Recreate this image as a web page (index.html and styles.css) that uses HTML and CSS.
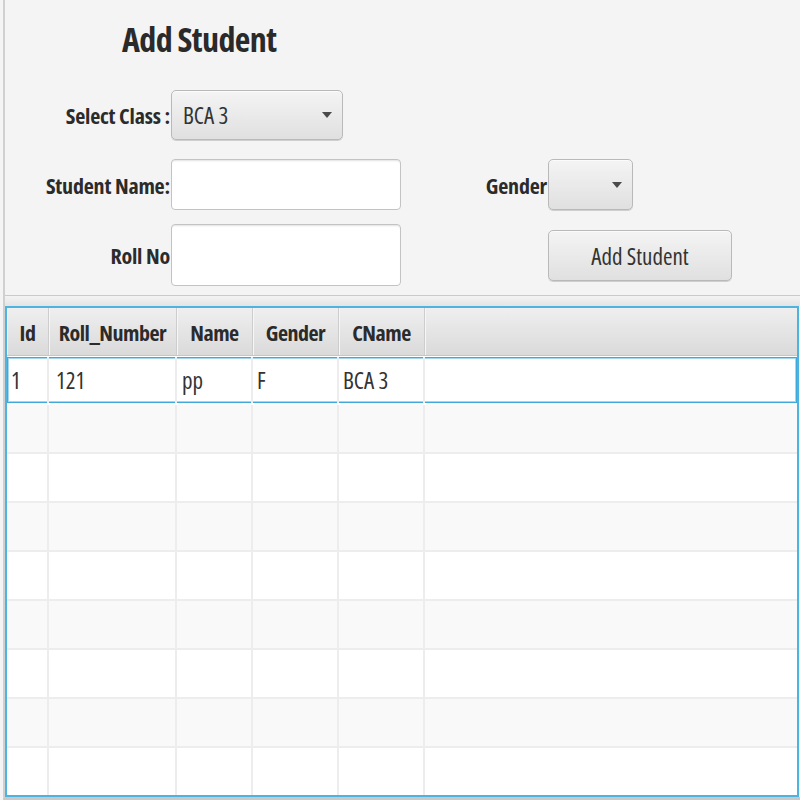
FILE: index.html
```html
<!DOCTYPE html>
<html>
<head>
<meta charset="utf-8">
<link rel="stylesheet" href="styles.css">
</head>
<body>
<div class="app">
  <section class="form">
    <h1 class="title">Add Student</h1>
    <div class="grid">
      <label class="lbl row-a">Select Class :</label>
      <div class="combo class-combo row-a"><span class="combo-text">BCA 3</span><i class="arrow"></i></div>

      <label class="lbl row-b">Student Name:</label>
      <div class="field row-b"></div>
      <label class="lbl row-b">Gender</label>
      <div class="combo gender-combo row-b"><i class="arrow"></i></div>

      <label class="lbl row-c">Roll No</label>
      <div class="field row-c"></div>
      <button class="btn row-c col-4">Add Student</button>
    </div>
  </section>
  <div class="divider"></div>
  <div class="table">
    <div class="thead">
      <div class="th">Id</div>
      <div class="th">Roll_Number</div>
      <div class="th">Name</div>
      <div class="th">Gender</div>
      <div class="th">CName</div>
      <div class="th filler"></div>
    </div>
    <div class="tbody">
      <div class="tr focused">
        <div class="td">1</div><div class="td">121</div><div class="td">pp</div><div class="td">F</div><div class="td">BCA 3</div><div class="td"></div>
      </div>
      <div class="tr alt"><div class="td"></div><div class="td"></div><div class="td"></div><div class="td"></div><div class="td"></div><div class="td"></div></div>
      <div class="tr"><div class="td"></div><div class="td"></div><div class="td"></div><div class="td"></div><div class="td"></div><div class="td"></div></div>
      <div class="tr alt"><div class="td"></div><div class="td"></div><div class="td"></div><div class="td"></div><div class="td"></div><div class="td"></div></div>
      <div class="tr"><div class="td"></div><div class="td"></div><div class="td"></div><div class="td"></div><div class="td"></div><div class="td"></div></div>
      <div class="tr alt"><div class="td"></div><div class="td"></div><div class="td"></div><div class="td"></div><div class="td"></div><div class="td"></div></div>
      <div class="tr"><div class="td"></div><div class="td"></div><div class="td"></div><div class="td"></div><div class="td"></div><div class="td"></div></div>
      <div class="tr alt"><div class="td"></div><div class="td"></div><div class="td"></div><div class="td"></div><div class="td"></div><div class="td"></div></div>
      <div class="tr"><div class="td"></div><div class="td"></div><div class="td"></div><div class="td"></div><div class="td"></div><div class="td"></div></div>
    </div>
  </div>
</div>
</body>
</html>
```
FILE: styles.css
```css
html, body {
  margin: 0;
  padding: 0;
}
body {
  background: #f4f4f4;
  font-family: "Open Sans", "Liberation Sans", sans-serif;
  font-stretch: 75%;
  color: #333333;
  width: 800px;
  height: 800px;
  overflow: hidden;
}
.app {
  height: 800px;
  box-sizing: border-box;
  margin-left: 3px;
  border-left: 2px solid #d0d0d0;
  border-bottom: 3px solid #c8c8c8;
  display: flex;
  flex-direction: column;
}
.form {
  height: 295px;
  flex: none;
}
.title {
  margin: 0;
  padding-left: 117px;
  height: 90px;
  font-size: 34px;
  letter-spacing: -0.6px;
  line-height: 78px;
  font-weight: 700;
  color: #2a2a2a;
}
.grid {
  display: grid;
  grid-template-columns: 166px 230px 147px 184px;
  grid-template-rows: 50px 19px 51px 14px 62px;
}
.row-a { grid-row: 1; }
.row-b { grid-row: 3; }
.row-c { grid-row: 5; }
.col-4 { grid-column: 4; }
.lbl {
  display: flex;
  align-items: center;
  justify-content: flex-end;
  font-size: 22px;
  letter-spacing: -0.2px;
  font-weight: 700;
  color: #2b2b2b;
  padding-right: 1px;
  white-space: nowrap;
}
.combo, .btn {
  box-sizing: border-box;
  border: 1px solid #b9b9b9;
  border-radius: 5px;
  background: linear-gradient(#f4f4f4, #e0e0e0);
  box-shadow: inset 0 1px 0 #fbfbfb, 0 1px 0 #cfcfcf;
  display: flex;
  align-items: center;
  position: relative;
}
.class-combo {
  width: 172px;
}
.gender-combo {
  width: 85px;
}
.combo-text {
  font-size: 23px;
  padding-left: 11px;
  color: #333;
}
.arrow {
  position: absolute;
  right: 10px;
  top: 50%;
  margin-top: -3px;
  width: 0;
  height: 0;
  border-left: 5px solid transparent;
  border-right: 5px solid transparent;
  border-top: 6px solid #4a4a4a;
}
.field {
  box-sizing: border-box;
  border: 1px solid #c3c3c3;
  border-radius: 4px;
  background: #ffffff;
  box-shadow: inset 0 2px 2px -1px #e2e2e2;
}
.btn {
  height: 51px;
  align-self: center;
  justify-content: center;
  font-family: "Open Sans", "Liberation Sans", sans-serif;
  font-stretch: 75%;
  font-size: 23px;
  color: #333;
  padding: 0;
  margin-top: 1px;
}
.divider {
  flex: none;
  height: 10px;
  border-top: 1px solid #cacaca;
  background: linear-gradient(#f3f3f3, #e4e4e4);
}
.table {
  flex: 1;
  margin-right: 1px;
  border: 2px solid #4fb3df;
  background: #ffffff;
  overflow: hidden;
  display: flex;
  flex-direction: column;
}
.thead, .tr {
  display: grid;
  grid-template-columns: 42px 128px 76px 86px 86px 1fr;
}
.thead {
  height: 48px;
  flex: none;
  background: linear-gradient(#efefef, #dadada);
  border-bottom: 1px solid #c6c6c6;
  box-sizing: border-box;
}
.th {
  display: flex;
  align-items: center;
  justify-content: center;
  font-size: 22px;
  letter-spacing: -0.5px;
  font-weight: 700;
  color: #2b2b2b;
  border-right: 1px solid #cdcdcd;
  box-shadow: inset 1px 0 0 #f6f6f6;
}
.th.filler {
  border-right: none;
}
.tr {
  height: 49px;
  box-sizing: border-box;
  border-bottom: 2px solid #ededed;
  background: #ffffff;
}
.tr.alt {
  background: #f9f9f9;
}
.tr.focused {
  box-shadow: inset 0 0 0 1px #3fa9dc, inset 0 0 0 2px #a4d6ee;
  border-bottom-color: #ffffff;
  margin-top: 1px;
  height: 48px;
}
.td {
  border-right: 2px solid #ededed;
  display: flex;
  align-items: center;
  padding-left: 5px;
  font-size: 23px;
  color: #333;
  white-space: nowrap;
}
.td:last-child {
  border-right: none;
}
.tr.focused .td:first-child {
  padding-left: 4px;
}
.tr.focused .td:nth-child(2) { padding-left: 7px; }
.tr.focused .td:nth-child(3) { padding-left: 5px; }
.tr.focused .td:nth-child(4) { padding-left: 4px; }
.tr.focused .td:nth-child(5) { padding-left: 4px; }
```
